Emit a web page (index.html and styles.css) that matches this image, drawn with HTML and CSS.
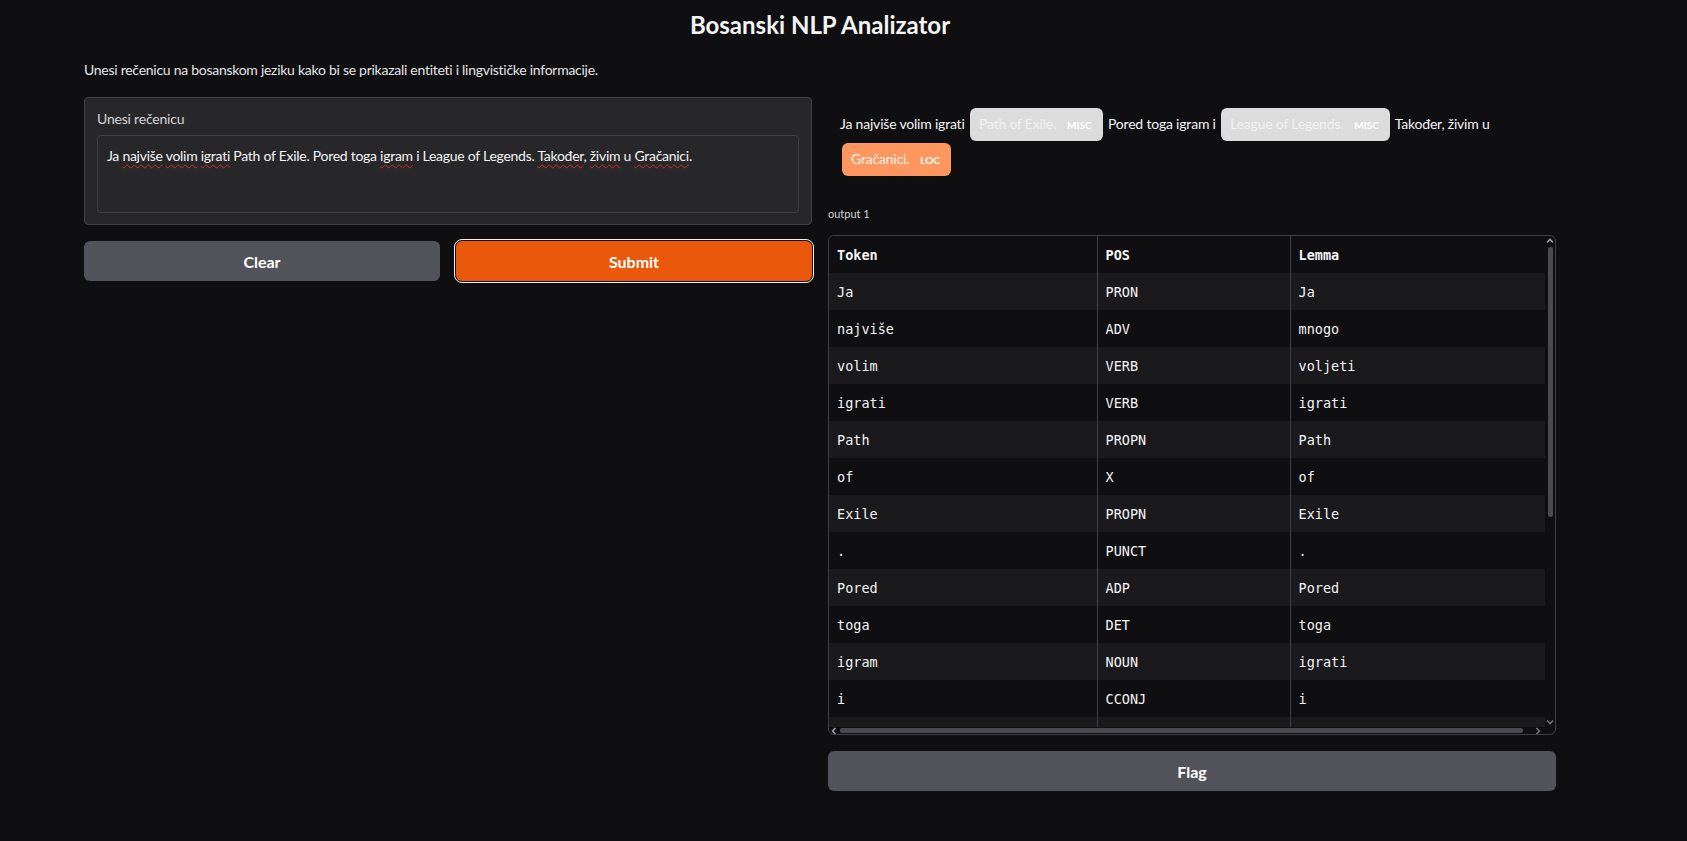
FILE: index.html
```html
<!DOCTYPE html>
<html lang="bs">
<head>
<meta charset="utf-8">
<title>Bosanski NLP Analizator</title>
<link rel="stylesheet" href="styles.css">
</head>
<body>
<div class="app">
  <h1 class="title">Bosanski NLP Analizator</h1>
  <p class="desc">Unesi rečenicu na bosanskom jeziku kako bi se prikazali entiteti i lingvističke informacije.</p>
  <div class="row">
    <div class="col">
      <div class="block">
        <div class="label">Unesi rečenicu</div>
        <div class="textarea">Ja <span class="sp">najviše</span> <span class="sp">volim</span> <span class="sp">igrati</span> Path of Exile. Pored toga <span class="sp">igram</span> i League of Legends. <span class="sp">Također</span>, <span class="sp">živim</span> u <span class="sp">Gračanici</span>.</div>
      </div>
      <div class="btn-row">
        <button class="btn secondary">Clear</button>
        <button class="btn primary">Submit</button>
      </div>
    </div>
    <div class="col">
      <div class="highlight">
        <span class="plain">Ja najviše volim igrati</span>
        <span class="chip misc"><span class="chip-text">Path of Exile.</span><span class="chip-label">MISC</span></span>
        <span class="plain">Pored toga igram i</span>
        <span class="chip misc"><span class="chip-text">League of Legends.</span><span class="chip-label">MISC</span></span>
        <span class="plain">Također, živim u</span>
        <span class="chip loc"><span class="chip-text">Gračanici.</span><span class="chip-label">LOC</span></span>
      </div>
      <div class="out-label">output 1</div>
      <div class="frame">
        <div class="frame-main">
          <div class="viewport">
            <table class="grid">
              <colgroup><col class="c1"><col class="c2"><col class="c3"></colgroup>
              <thead><tr><th>Token</th><th>POS</th><th>Lemma</th></tr></thead>
              <tbody>
                <tr><td>Ja</td><td>PRON</td><td>Ja</td></tr>
                <tr><td>najviše</td><td>ADV</td><td>mnogo</td></tr>
                <tr><td>volim</td><td>VERB</td><td>voljeti</td></tr>
                <tr><td>igrati</td><td>VERB</td><td>igrati</td></tr>
                <tr><td>Path</td><td>PROPN</td><td>Path</td></tr>
                <tr><td>of</td><td>X</td><td>of</td></tr>
                <tr><td>Exile</td><td>PROPN</td><td>Exile</td></tr>
                <tr><td>.</td><td>PUNCT</td><td>.</td></tr>
                <tr><td>Pored</td><td>ADP</td><td>Pored</td></tr>
                <tr><td>toga</td><td>DET</td><td>toga</td></tr>
                <tr><td>igram</td><td>NOUN</td><td>igrati</td></tr>
                <tr><td>i</td><td>CCONJ</td><td>i</td></tr>
                <tr class="partial"><td></td><td></td><td></td></tr>
              </tbody>
            </table>
          </div>
          <div class="vbar">
            <svg class="arrow" width="10" height="10" viewBox="0 0 10 10"><path d="M2 6.5 L5 3.5 L8 6.5" fill="none" stroke="#a1a1aa" stroke-width="1.6"/></svg>
            <div class="vthumb-track"><div class="vthumb"></div></div>
            <svg class="arrow" width="10" height="10" viewBox="0 0 10 10"><path d="M2 3.5 L5 6.5 L8 3.5" fill="none" stroke="#71717a" stroke-width="1.6"/></svg>
          </div>
        </div>
        <div class="hbar">
          <svg class="harrow" width="10" height="8" viewBox="0 0 10 8"><path d="M6.5 1 L3.5 4 L6.5 7" fill="none" stroke="#a1a1aa" stroke-width="1.6"/></svg>
          <div class="hthumb-track"><div class="hthumb"></div></div>
          <svg class="harrow" width="10" height="8" viewBox="0 0 10 8"><path d="M3.5 1 L6.5 4 L3.5 7" fill="none" stroke="#71717a" stroke-width="1.6"/></svg>
          <div class="hcorner"></div>
        </div>
      </div>
      <button class="btn secondary flag">Flag</button>
    </div>
  </div>
</div>
</body>
</html>
```

FILE: styles.css
```css
* { box-sizing: border-box; }

html, body {
  margin: 0;
  padding: 0;
  background: #0f0f11;
  color: #f4f4f5;
  font-family: "Lato", "Noto Sans", sans-serif;
}

.app {
  width: 1472px;
  margin-left: 84px;
  padding-top: 9px;
}

.title {
  margin: 0;
  text-align: center;
  font-size: 24px;
  line-height: 32px;
  font-weight: 700;
  color: #f4f4f5;
}

.desc {
  margin: 19px 0 0 0;
  font-size: 14px;
  line-height: 20px;
  letter-spacing: -0.27px;
  color: #e4e4e7;
}

.row {
  display: flex;
  gap: 16px;
  margin-top: 17px;
  align-items: flex-start;
}

.col {
  flex: 1 1 0;
  min-width: 0;
  display: flex;
  flex-direction: column;
}

.block {
  background: #27272a;
  border: 1px solid #3f3f46;
  border-radius: 4px;
  padding: 11px 12px 11px 12px;
}

.label {
  font-size: 14px;
  line-height: 20px;
  letter-spacing: -0.2px;
  color: #d4d4d8;
}

.textarea {
  margin-top: 6px;
  height: 78px;
  border: 1px solid #3f3f46;
  border-radius: 4px;
  background: #27272a;
  padding: 10px 9px;
  font-size: 14px;
  line-height: 20px;
  letter-spacing: -0.27px;
  color: #f4f4f5;
}

.sp {
  text-decoration: underline wavy #d23030;
  text-decoration-thickness: 1px;
  text-underline-offset: 3px;
}

.btn-row {
  display: flex;
  gap: 16px;
  margin-top: 16px;
}

.btn {
  flex: 1 1 0;
  height: 40px;
  border: none;
  border-radius: 6px;
  font-family: inherit;
  font-size: 16px;
  font-weight: 700;
  color: #ffffff;
}

.secondary { background: #52525b; }

.primary {
  background: #ea580c;
  outline: 1.5px solid #f4f4f5;
  outline-offset: 1px;
}

.highlight {
  padding: 9px 12px 0 12px;
  line-height: 35px;
  font-size: 14px;
  letter-spacing: -0.2px;
  color: #f4f4f5;
}

.chip {
  display: inline-block;
  border-radius: 6px;
  padding: 0 11px 0 9px;
  line-height: 31px;
  margin: 0 2px;
}

.chip.misc { background: #dcdcdc; color: #f2f2f2; }
.chip.loc { background: #fd975f; color: #fff3ec; }

.chip-label {
  margin-left: 11px;
  font-size: 10px;
  font-weight: 700;
  letter-spacing: 0;
  color: #ffffff;
}

.out-label {
  margin-top: 30px;
  font-size: 11px;
  line-height: 16px;
  color: #d4d4d8;
}

.frame {
  margin-top: 13px;
  border: 1px solid #3f3f46;
  border-radius: 6px;
  height: 500px;
  overflow: hidden;
  display: flex;
  flex-direction: column;
}

.frame-main {
  display: flex;
  height: 491px;
}

.viewport {
  flex: 1 1 auto;
  overflow: hidden;
}

.grid {
  border-collapse: collapse;
  table-layout: fixed;
  width: 717px;
  font-family: "DejaVu Sans Mono", "Liberation Mono", monospace;
  font-size: 13.5px;
  color: #f4f4f5;
}

.c1 { width: 268px; }
.c2 { width: 193px; }
.c3 { width: 256px; }

.grid th, .grid td {
  height: 37px;
  padding: 0 8px;
  text-align: left;
  white-space: nowrap;
  border-left: 1px solid #3f3f46;
}

.grid th:first-child, .grid td:first-child { border-left: none; }

.grid th {
  font-weight: 700;
  background: #0f0f11;
}

.grid tbody tr:nth-child(odd) td { background: #1a1a1d; }
.grid tbody tr:nth-child(even) td { background: #0f0f11; }

.vbar {
  width: 10px;
  flex: 0 0 10px;
  display: flex;
  flex-direction: column;
  align-items: center;
}

.arrow { flex: 0 0 10px; }

.vthumb-track {
  flex: 1 1 auto;
  width: 5px;
  padding-top: 1px;
}

.vthumb {
  height: 270px;
  width: 5px;
  background: #4a4a4f;
  border-radius: 2px;
}

.hbar {
  height: 7px;
  display: flex;
  align-items: center;
}

.harrow { flex: 0 0 10px; }

.hthumb-track {
  flex: 1 1 auto;
  height: 5px;
  padding-left: 1px;
}

.hthumb {
  width: 683px;
  height: 5px;
  background: #4a4a4f;
  border-radius: 2px;
}

.hcorner { width: 12px; flex: 0 0 12px; }

.flag {
  flex: 0 0 40px;
  margin-top: 16px;
}
```
